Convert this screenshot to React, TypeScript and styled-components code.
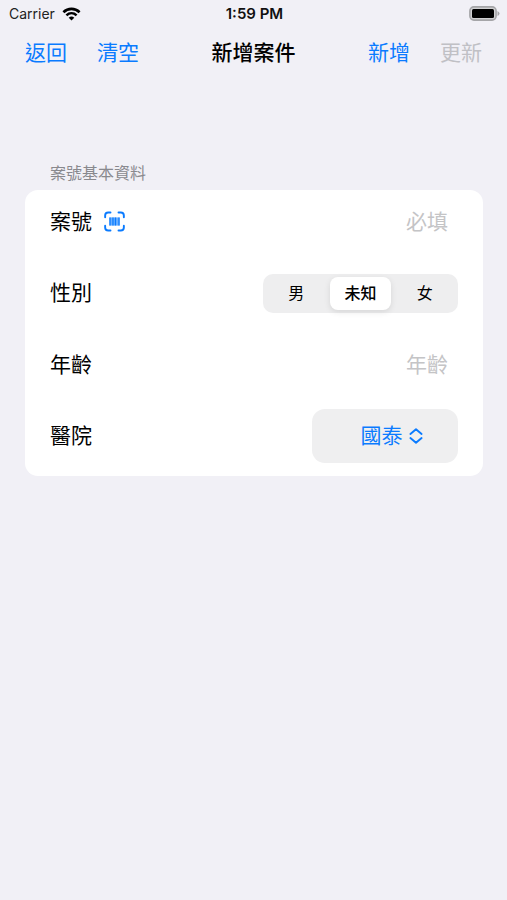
import React, { useState } from "react";
import styled, { createGlobalStyle } from "styled-components";

const blue = "#0a7bff";

const GlobalStyle = createGlobalStyle`
  *, *::before, *::after { box-sizing: border-box; }
  body {
    margin: 0;
    background: #f1f0f6;
    color: #000;
    font-family: Inter, "Noto Sans CJK TC", sans-serif;
  }
  button, input, select { font: inherit; color: inherit; }
`;

const Screen = styled.div`
  min-height: 100vh;
  display: flex;
  flex-direction: column;
`;

const StatusBar = styled.div`
  display: grid;
  grid-template-columns: 1fr auto 1fr;
  align-items: center;
  height: 27px;
  padding: 0 7px 0 9px;
  font-size: 14px;
  line-height: 20px;
`;

const Carrier = styled.div`
  display: flex;
  align-items: center;
  gap: 7px;
  color: #222;
`;

const Clock = styled.div`
  font-size: 15px;
  font-weight: 600;
  color: #111;
`;

const BatteryIcon = styled.svg`
  justify-self: end;
`;

const NavBar = styled.header`
  display: grid;
  grid-template-columns: 1fr auto 1fr;
  align-items: center;
  height: 52px;
  padding: 0 25px;
`;

const NavGroup = styled.div<{ $end?: boolean }>`
  display: flex;
  gap: 30px;
  justify-content: ${(p) => (p.$end ? "flex-end" : "flex-start")};
`;

const NavButton = styled.button`
  padding: 0;
  border: 0;
  background: none;
  color: ${blue};
  font-size: 21px;
  line-height: 30px;
  &:disabled { color: #c0c0c5; }
`;

const Title = styled.h1`
  margin: 0;
  font-size: 21px;
  line-height: 30px;
  font-weight: 500;
`;

const Form = styled.form`
  padding: 82px 24px 0 25px;
`;

const SectionTitle = styled.h2`
  margin: 0 0 4px;
  padding: 0 25px;
  font-size: 16px;
  line-height: 25px;
  font-weight: 400;
  color: #89898e;
`;

const Card = styled.div`
  padding: 0 25px;
  border-radius: 13px;
  background: #fff;
`;

const Row = styled.div<{ $tall?: boolean }>`
  display: flex;
  align-items: center;
  justify-content: space-between;
  min-height: ${(p) => (p.$tall ? 80 : 63)}px;
  font-size: 21px;
  line-height: 30px;
`;

const RowLead = styled.div`
  display: flex;
  align-items: center;
  gap: 12px;
  flex: none;
`;

const Label = styled.label`
  flex: none;
`;

const ScanButton = styled.button`
  display: flex;
  padding: 0;
  border: 0;
  background: none;
  color: ${blue};
`;

const TextField = styled.input`
  flex: 1;
  min-width: 0;
  padding: 0 10px 0 0;
  border: 0;
  outline: 0;
  background: none;
  text-align: right;
  &::placeholder { color: #c4c4c6; opacity: 1; }
`;

const Segments = styled.div`
  display: grid;
  grid-template-columns: repeat(3, 1fr);
  flex: 0 1 195px;
  height: 39px;
  padding: 3px 1px;
  border-radius: 10px;
  background: #eeeeef;
`;

const Segment = styled.label`
  display: flex;
  align-items: center;
  justify-content: center;
  margin: 0 2px;
  border-radius: 8px;
  font-size: 16px;
  line-height: 24px;
  &:has(input:checked) {
    background: #fff;
    font-weight: 500;
    box-shadow: 0 2px 6px rgba(0, 0, 0, 0.1);
  }
`;

const SegmentInput = styled.input`
  appearance: none;
  width: 0;
  height: 0;
  margin: 0;
`;

const Picker = styled.div`
  display: grid;
  align-items: center;
  flex: 0 1 146px;
  height: 54px;
  border-radius: 13px;
  background: #efeff0;
  color: ${blue};
`;

const PickerSelect = styled.select`
  grid-area: 1 / 1;
  width: 100%;
  height: 100%;
  appearance: none;
  border: 0;
  outline: 0;
  padding: 0 36px 0 29px;
  background: none;
  color: ${blue};
  text-align: center;
  text-align-last: center;
`;

const PickerArrows = styled.svg`
  grid-area: 1 / 1;
  justify-self: end;
  margin-right: 35px;
  pointer-events: none;
`;

const genders = ["男", "未知", "女"];

export default function App() {
  const [gender, setGender] = useState("未知");
  return (
    <>
      <GlobalStyle />
      <Screen>
        <StatusBar>
          <Carrier>
            Carrier
            <svg width="19" height="14" viewBox="0 0 19 14" fill="none" stroke="#000" aria-hidden="true">
              <path d="M1.4 5.2C6 .7 13 .7 17.6 5.2" strokeWidth="2.6" />
              <path d="M4.4 8.3C7.4 5.5 11.6 5.5 14.6 8.3" strokeWidth="2.5" />
              <path d="M9.5 13.5 6.7 10.7Q9.5 8.4 12.3 10.7Z" fill="#000" stroke="none" />
            </svg>
          </Carrier>
          <Clock>1:59 PM</Clock>
          <BatteryIcon width="31" height="15" viewBox="0 0 31 15" role="img" aria-label="Battery">
            <rect x=".9" y=".9" width="26.2" height="13.2" rx="4" fill="#d0d0d2" stroke="#a5a5a8" strokeWidth="1.6" />
            <rect x="3" y="3" width="22" height="9" rx="1.5" fill="#000" />
            <path d="M28.5 5Q30.5 6 30.5 7.5T28.5 10Z" fill="#a5a5a8" />
          </BatteryIcon>
        </StatusBar>
        <NavBar>
          <NavGroup>
            <NavButton type="button">返回</NavButton>
            <NavButton type="reset" form="case">清空</NavButton>
          </NavGroup>
          <Title>新增案件</Title>
          <NavGroup $end>
            <NavButton type="button">新增</NavButton>
            <NavButton type="button" disabled>更新</NavButton>
          </NavGroup>
        </NavBar>
        <Form id="case">
          <SectionTitle>案號基本資料</SectionTitle>
          <Card>
            <Row>
              <RowLead>
                <Label htmlFor="case-no">案號</Label>
                <ScanButton type="button" aria-label="掃描">
                  <svg width="21" height="21" viewBox="0 0 22 22" fill="none" stroke="currentColor" aria-hidden="true">
                    <path
                      d="M1.2 6.5V4.7Q1.2 1.5 4.4 1.5H6.8M15.2 1.5H17.6Q20.8 1.5 20.8 4.7V6.5M20.8 15.5V17.3Q20.8 20.5 17.6 20.5H15.2M6.8 20.5H4.4Q1.2 20.5 1.2 17.3V15.5"
                      strokeWidth="2"
                      strokeLinecap="round"
                    />
                    <path d="M5.6 11H16.4" strokeWidth="8.6" opacity=".6" />
                    <path d="M6.3 6.7V15.3M9.4 6.7V15.3M12 6.7V15.3M15.7 6.7V15.3" strokeWidth="1.3" />
                  </svg>
                </ScanButton>
              </RowLead>
              <TextField id="case-no" placeholder="必填" />
            </Row>
            <Row $tall>
              <Label as="span" id="gender-label">性別</Label>
              <Segments role="radiogroup" aria-labelledby="gender-label">
                {genders.map((g) => (
                  <Segment key={g}>
                    <SegmentInput type="radio" name="gender" checked={gender === g} onChange={() => setGender(g)} />
                    {g}
                  </Segment>
                ))}
              </Segments>
            </Row>
            <Row>
              <Label htmlFor="age">年齡</Label>
              <TextField id="age" inputMode="numeric" placeholder="年齡" />
            </Row>
            <Row $tall>
              <Label htmlFor="hospital">醫院</Label>
              <Picker>
                <PickerSelect id="hospital">
                  <option>國泰</option>
                </PickerSelect>
                <PickerArrows
                  width="14"
                  height="16"
                  viewBox="0 0 14 16"
                  fill="none"
                  stroke="currentColor"
                  strokeWidth="1.9"
                  strokeLinecap="round"
                  strokeLinejoin="round"
                  aria-hidden="true"
                >
                  <path d="M1.4 6 7 1.3 12.6 6M1.4 10 7 14.7 12.6 10" />
                </PickerArrows>
              </Picker>
            </Row>
          </Card>
        </Form>
      </Screen>
    </>
  );
}
